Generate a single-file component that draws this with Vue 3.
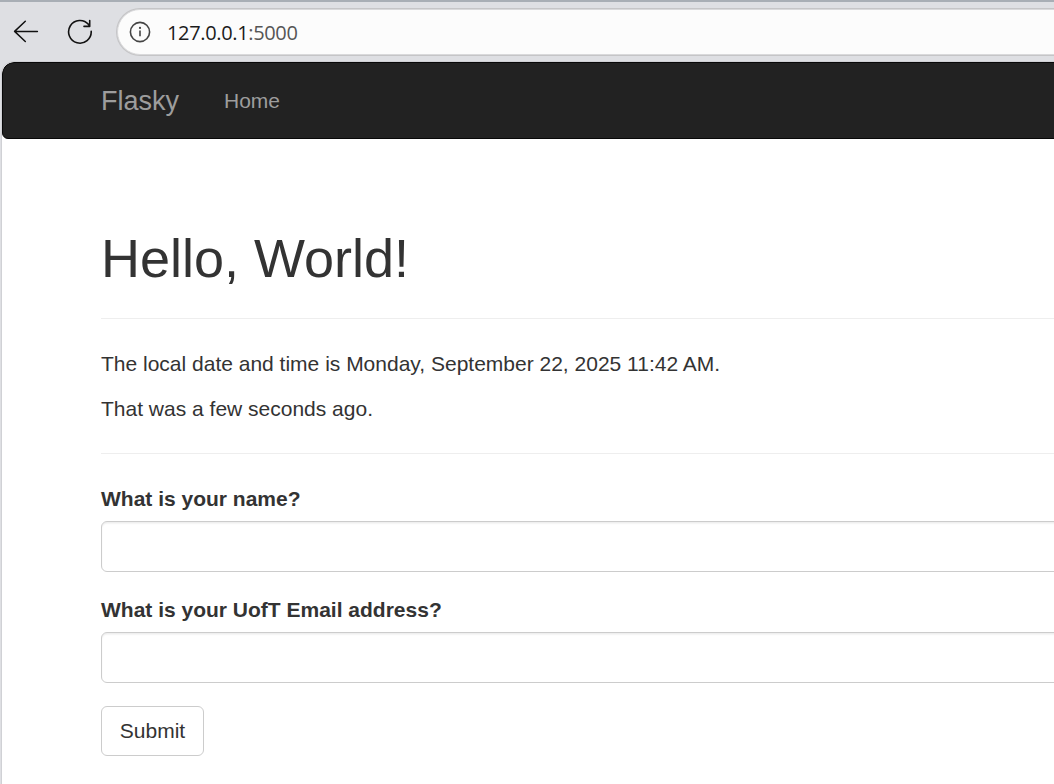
<script setup>
const fields = [
  { id: 'name', label: 'What is your name?' },
  { id: 'email', label: 'What is your UofT Email address?' }
]
</script>

<template>
  <div class="window">
    <header class="toolbar">
      <svg class="back" width="26" height="24" viewBox="0 0 26 24" fill="none" stroke="#111" stroke-width="1.5" stroke-linecap="round" stroke-linejoin="round">
        <path d="M12.3 1.3 1.6 11.4 12.3 21.5M1.8 11.4H24.4" />
      </svg>
      <svg class="reload" width="26" height="26" viewBox="0 0 26 26" fill="none" stroke="#111" stroke-width="1.6" stroke-linecap="round" stroke-linejoin="round">
        <path d="M24.2 12.2A11.3 11.3 0 1 1 21.6 5.6L22.7 7M22.7 1.6V7.4H17" />
      </svg>
      <div class="address">
        <svg class="info" width="22" height="22" viewBox="0 0 22 22" fill="none" stroke="#444" stroke-width="1.6">
          <circle cx="11" cy="11" r="9.6" />
          <path d="M11 9.5V15.2" />
          <circle cx="11" cy="6.9" r="1.1" fill="#444" stroke="none" />
        </svg>
        <span class="url">127.0.0.1<span class="port">:5000</span></span>
      </div>
    </header>
    <div class="page">
      <nav class="navbar">
        <a class="brand">Flasky</a>
        <a class="link">Home</a>
      </nav>
      <main class="content">
        <h1>Hello, World!</h1>
        <p class="date">The local date and time is Monday, September 22, 2025 11:42 AM.</p>
        <p class="ago">That was a few seconds ago.</p>
        <form @submit.prevent>
          <div v-for="f in fields" :key="f.id" class="group">
            <label :for="f.id">{{ f.label }}</label>
            <input :id="f.id" type="text" />
          </div>
          <button type="submit">Submit</button>
        </form>
      </main>
    </div>
  </div>
</template>

<style>
body { margin: 0; overflow: hidden; }
</style>

<style scoped>
.window {
  box-sizing: border-box;
  width: 1054px;
  height: 784px;
  overflow: hidden;
  background: #dedfe3;
  border-top: 2px solid #a8aeb5;
  font-family: "Liberation Sans", Arial, sans-serif;
  font-size: 21px;
  line-height: 30px;
  color: #333;
}
.toolbar {
  display: flex;
  align-items: center;
  box-sizing: border-box;
  height: 60px;
  padding-left: 13px;
}
.back { margin-right: 28px; }
.reload { margin-right: 24px; }
.toolbar svg { flex: none; }
.address {
  display: flex;
  align-items: center;
  box-sizing: border-box;
  flex: 1;
  height: 46px;
  margin-right: -40px;
  padding-left: 11px;
  border: 1px solid #d9d9db;
  border-radius: 23px;
  background: #fcfcfc;
  box-shadow: 0 0 0 1px #c5c5c7;
}
.url {
  margin-left: 16px;
  padding-top: 1px;
  font-family: "Open Sans", sans-serif;
  font-size: 20px;
  letter-spacing: -0.35px;
  color: #1b1b1b;
}
.port { color: #555; }
.page {
  height: 722px;
  margin-left: 2px;
  background: #fff;
  border-top-left-radius: 12px;
  box-shadow: 0 0 0 1px #d0d1d5;
  overflow: hidden;
  width: 1052px;
}
.navbar {
  display: flex;
  align-items: center;
  box-sizing: border-box;
  width: 1100px;
  height: 77px;
  padding-left: 98px;
  border: 1px solid #080808;
  border-radius: 12px 6px 6px 6px;
  background: #222;
  color: #9d9d9d;
}
.brand { width: 123px; font-size: 27px; }
.content { width: 1100px; padding-left: 99px; }
h1 {
  margin: 90px 0 30px;
  height: 89px;
  border-bottom: 1px solid #eee;
  font-size: 54px;
  font-weight: 500;
  line-height: 59px;
}
p { margin: 0 0 15px; }
.ago { padding-bottom: 29px; border-bottom: 1px solid #eee; margin-bottom: 30px; }
.group { margin-bottom: 23px; }
label {
  display: block;
  margin-bottom: 7px;
  font-weight: 700;
}
input {
  display: block;
  box-sizing: border-box;
  width: 1100px;
  height: 51px;
  border: 1px solid #ccc;
  border-radius: 6px;
  background: #fff;
  box-shadow: inset 0 1.5px 1.5px rgba(0, 0, 0, 0.075);
}
button {
  display: block;
  box-sizing: border-box;
  width: 103px;
  height: 50px;
  padding: 0;
  border: 1px solid #ccc;
  border-radius: 6px;
  background: #fff;
  color: #333;
  font: inherit;
}
</style>
